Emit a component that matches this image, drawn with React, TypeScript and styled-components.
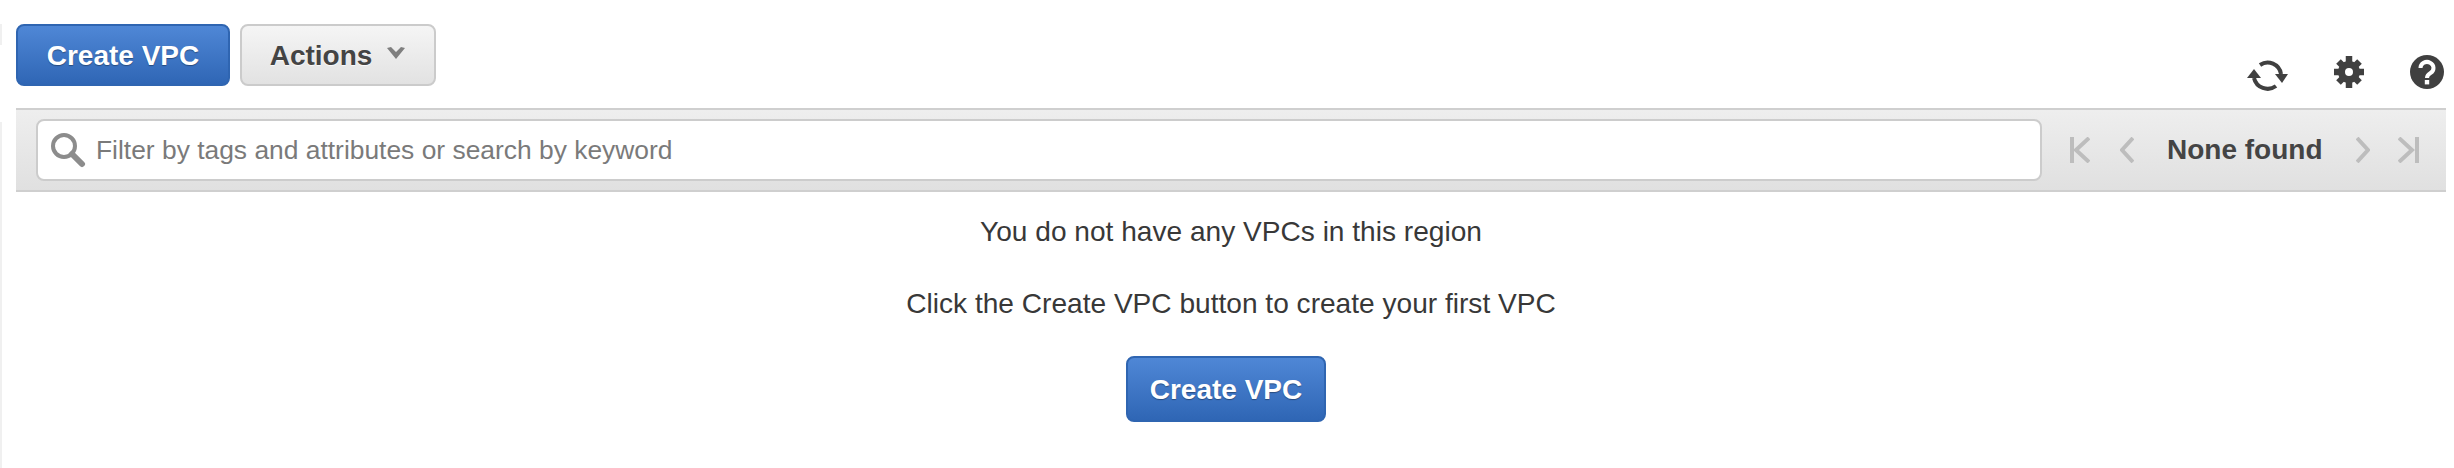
import React from 'react';
import styled, { createGlobalStyle } from 'styled-components';

const GlobalStyle = createGlobalStyle`
  html, body {
    margin: 0;
    padding: 0;
    background: #fff;
    font-family: "Liberation Sans", Arial, sans-serif;
    color: #333;
  }
`;

const Page = styled.div`
  width: 2454px;
  height: 468px;
  box-sizing: border-box;
  padding: 24px 8px 0 16px;
  overflow: hidden;
  position: relative;
`;

const SideEdge = styled.div`
  position: absolute;
  left: 0;
  top: 24px;
  bottom: 0;
  width: 2px;
  background: linear-gradient(
    to bottom,
    #f0f0f0 0,
    #f0f0f0 21px,
    transparent 21px,
    transparent 98px,
    #f0f0f0 98px
  );
`;

const TopBar = styled.div`
  display: flex;
  justify-content: space-between;
  align-items: flex-start;
  height: 84px;
`;

const ButtonRow = styled.div`
  display: flex;
  gap: 10px;
`;

const Button = styled.button<{ $primary?: boolean; $width: number; $height?: number }>`
  box-sizing: border-box;
  width: ${(p) => p.$width}px;
  height: ${(p) => p.$height ?? 62}px;
  border-radius: 8px;
  font-family: inherit;
  font-size: 28px;
  font-weight: 700;
  display: flex;
  align-items: center;
  justify-content: center;
  padding: 2px 0 0;
  color: ${(p) => (p.$primary ? '#fff' : '#444')};
  border: 2px solid ${(p) => (p.$primary ? '#2f65b1' : '#cbcbcb')};
  background: ${(p) =>
    p.$primary
      ? 'linear-gradient(to bottom, #4f87d6 0%, #2f66b5 100%)'
      : 'linear-gradient(to bottom, #f5f5f5 0%, #e2e2e2 100%)'};
  text-shadow: ${(p) =>
    p.$primary ? '0 1px 1px rgba(0, 0, 0, 0.35)' : '0 1px 1px rgba(255, 255, 255, 0.8)'};
`;

const CenterButton = styled(Button)`
  margin: -5px 10px 0 0;
`;

const Caret = styled.svg`
  margin-left: 14px;
  margin-top: -6px;
`;

const ToolIcons = styled.div`
  display: flex;
  align-items: flex-start;
  gap: 45px;
  margin: 31px 2px 0 0;
`;

const ToolIcon = styled.svg<{ $top?: number }>`
  margin-top: ${(p) => p.$top ?? 0}px;
`;

const FilterBar = styled.div`
  box-sizing: border-box;
  height: 84px;
  display: flex;
  align-items: center;
  padding: 0 0 0 20px;
  border-top: 2px solid #cfcfcf;
  border-bottom: 2px solid #cfcfcf;
  background: linear-gradient(to bottom, #eeeeee 0%, #e0e0e0 100%);
`;

const SearchBox = styled.div`
  box-sizing: border-box;
  width: 2006px;
  height: 62px;
  display: flex;
  align-items: center;
  gap: 10px;
  padding-left: 12px;
  background: #fff;
  border: 2px solid #cccccc;
  border-radius: 8px;
`;

const SearchText = styled.span`
  font-size: 26.4px;
  color: #7a7a7a;
`;

const Pager = styled.div`
  flex: 1;
  display: flex;
  align-items: center;
  padding-left: 28px;
`;

const PagerLabel = styled.span`
  font-size: 28px;
  font-weight: 700;
  color: #444;
  margin: 0 33px;
`;

const PagerIcon = styled.svg<{ $gap?: number }>`
  margin-left: ${(p) => p.$gap ?? 0}px;
`;

const Empty = styled.div`
  display: flex;
  flex-direction: column;
  align-items: center;
  padding-top: 25px;
`;

const Message = styled.p`
  margin: 0 0 42px;
  font-size: 28.1px;
  line-height: 30px;
  color: #383838;
`;

const App: React.FC = () => (
  <Page>
    <GlobalStyle />
    <SideEdge />
    <TopBar>
      <ButtonRow>
        <Button $primary $width={214}>Create VPC</Button>
        <Button $width={196}>
          Actions
          <Caret width="20" height="14" viewBox="0 0 20 14">
            <path d="M1 2 L5 1 L10 6 L15 1 L19 2 L10 13 Z" fill="#7f7f7f" />
          </Caret>
        </Button>
      </ButtonRow>
      <ToolIcons>
        <ToolIcon $top={4} width="41" height="33" viewBox="0 0 41 33">
          <path d="M13 6 A13.5 13.5 0 0 1 34 15" fill="none" stroke="#404040" strokeWidth="4" />
          <path d="M7 19 A14 14 0 0 0 29 27" fill="none" stroke="#404040" strokeWidth="4" />
          <path d="M0 19 L14 19 L7 10 Z" fill="#404040" />
          <path d="M28 15 L41 15 L35 24 Z" fill="#404040" />
        </ToolIcon>
        <ToolIcon $top={1} width="32" height="32" viewBox="0 0 32 32">
          <circle cx="16" cy="16" r="7.5" fill="none" stroke="#404040" strokeWidth="7" />
          <g stroke="#404040" strokeWidth="6.5">
            <path d="M16 0 V8" />
            <path d="M16 24 V32" />
            <path d="M1 16 H8" />
            <path d="M24 16 H31" />
            <path d="M5.5 5.5 L10 10" />
            <path d="M22 22 L26.5 26.5" />
            <path d="M26.5 5.5 L22 10" />
            <path d="M10 22 L5.5 26.5" />
          </g>
        </ToolIcon>
        <ToolIcon width="34" height="34" viewBox="0 0 34 34">
          <circle cx="17" cy="17" r="17" fill="#404040" />
          <path d="M10.5 13 A6.5 6 0 1 1 20.5 18 Q17 20 17 23" fill="none" stroke="#fff" strokeWidth="4" />
          <rect x="14.8" y="25" width="4.4" height="4.4" fill="#fff" />
        </ToolIcon>
      </ToolIcons>
    </TopBar>
    <FilterBar>
      <SearchBox>
        <svg width="36" height="36" viewBox="0 0 36 36">
          <circle cx="14" cy="14" r="11" fill="none" stroke="#8c8c8c" strokeWidth="4" />
          <path d="M22 22 L32 32" stroke="#8c8c8c" strokeWidth="6" strokeLinecap="round" />
        </svg>
        <SearchText>Filter by tags and attributes or search by keyword</SearchText>
      </SearchBox>
      <Pager>
        <PagerIcon width="20" height="26" viewBox="0 0 20 26">
          <path d="M2 0 V26 M19 1 L6 13 L19 25" fill="none" stroke="#bdbdbd" strokeWidth="4" />
        </PagerIcon>
        <PagerIcon $gap={30} width="14" height="26" viewBox="0 0 14 26">
          <path d="M13 1 L2 13 L13 25" fill="none" stroke="#bdbdbd" strokeWidth="4" />
        </PagerIcon>
        <PagerLabel>None found</PagerLabel>
        <PagerIcon width="14" height="26" viewBox="0 0 14 26">
          <path d="M1 1 L12 13 L1 25" fill="none" stroke="#bdbdbd" strokeWidth="4" />
        </PagerIcon>
        <PagerIcon $gap={28} width="21" height="26" viewBox="0 0 21 26">
          <path d="M19 0 V26 M1 1 L14 13 L1 25" fill="none" stroke="#bdbdbd" strokeWidth="4" />
        </PagerIcon>
      </Pager>
    </FilterBar>
    <Empty>
      <Message>You do not have any VPCs in this region</Message>
      <Message>Click the Create VPC button to create your first VPC</Message>
      <CenterButton $primary $width={200} $height={66}>Create VPC</CenterButton>
    </Empty>
  </Page>
);

export default App;
